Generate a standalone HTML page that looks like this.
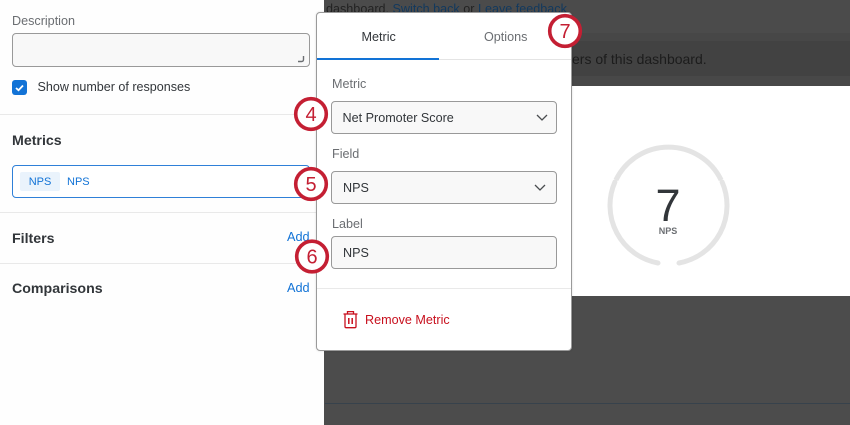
<!DOCTYPE html>
<html>
<head>
<meta charset="utf-8">
<style>
html,body{margin:0;padding:0;}
body{width:850px;height:425px;overflow:hidden;position:relative;background:#4c4c4c;font-family:"Liberation Sans",sans-serif;}
.a{position:absolute;white-space:nowrap;}
.box{position:absolute;box-sizing:border-box;border:1px solid #999;border-radius:4px;background:#f8f8f8;}
.lbl{color:#6b6e72;font-size:12.6px;line-height:16px;}
.h{color:#32363a;font-size:14.2px;font-weight:bold;line-height:18px;}
.val{color:#32363a;font-size:12.6px;line-height:16px;}
.blue{color:#1273d6;font-size:12.7px;line-height:16px;}
.sep{position:absolute;height:1px;background:#e9e9e9;}
</style>
</head>
<body>
<!-- dark background -->
<div class="a" style="left:325px;top:0;width:525px;height:33px;background:#4b4b4b;"></div>
<div class="a" style="left:325px;top:33px;width:525px;height:8px;background:#474747;"></div>
<div class="a" style="left:325px;top:41px;width:525px;height:35px;background:#424242;"></div>
<div class="a" style="left:325px;top:76px;width:525px;height:10px;background:#484848;"></div>
<div class="a" style="left:326px;top:0px;font-size:12.6px;line-height:18px;color:#222;">dashboard. <span style="color:#12395e;">Switch back</span> or <span style="color:#12395e;">Leave feedback</span></div>
<div class="a" style="left:572px;top:50px;font-size:14px;line-height:18px;color:#1c1c1c;">ers of this dashboard.</div>
<!-- white card -->
<div class="a" style="left:325px;top:86px;width:525px;height:210px;background:#fff;"></div>
<div class="a" style="left:325px;top:403px;width:525px;height:1px;background:#37424c;"></div>
<!-- gauge -->
<svg class="a" style="left:600px;top:137px;" width="137" height="137" viewBox="0 0 137 137">
  <g fill="none" stroke="#e4e4e4" stroke-width="5">
    <path d="M15.9 43A58.5 58.5 0 0 1 121.1 43"/>
    <path d="M122.1 45A58.5 58.5 0 0 1 79 126" stroke-linecap="round"/>
    <path d="M14.9 45A58.5 58.5 0 0 0 58 126" stroke-linecap="round"/>
  </g>
</svg>
<div class="a" style="left:648px;top:179px;width:40px;text-align:center;font-size:45px;line-height:54px;color:#32363a;">7</div>
<div class="a" style="left:648px;top:226px;width:40px;text-align:center;font-size:9px;line-height:11px;font-weight:bold;color:#6b6e72;">NPS</div>

<!-- left panel -->
<div class="a" style="left:0;top:0;width:324px;height:425px;background:#fefefe;"></div>
<div class="a lbl" style="left:12px;top:13px;">Description</div>
<div class="box" style="left:12px;top:33px;width:298px;height:34px;"></div>
<svg class="a" style="left:296px;top:54px;" width="10" height="10"><path d="M7.5 2V5.5Q7.5 7.5 5.5 7.5H2" fill="none" stroke="#6b6e72" stroke-width="1.4"/></svg>
<div class="a" style="left:12px;top:80px;width:15px;height:15px;border-radius:3px;background:#1273d6;"></div>
<svg class="a" style="left:12px;top:80px;" width="15" height="15"><path d="M4 8L6.5 10.2L11 5.5" fill="none" stroke="#fff" stroke-width="1.8"/></svg>
<div class="a" style="left:37.5px;top:79px;font-size:12.55px;line-height:16px;color:#32363a;">Show number of responses</div>
<div class="sep" style="left:0;top:114px;width:324px;"></div>
<div class="a h" style="left:12px;top:132px;">Metrics</div>
<div class="a" style="left:12px;top:165px;width:298px;height:33px;box-sizing:border-box;border:1px solid #2f80d8;border-radius:4px;background:#fff;"></div>
<div class="a" style="left:20px;top:172px;width:40px;height:19px;background:#eaf3fc;border-radius:2px;"></div>
<div class="a blue" style="left:20px;top:174px;width:40px;text-align:center;font-size:11px;">NPS</div>
<div class="a blue" style="left:67px;top:174px;font-size:11px;">NPS</div>
<div class="sep" style="left:0;top:212px;width:324px;"></div>
<div class="a h" style="left:12px;top:230px;">Filters</div>
<div class="a blue" style="left:287px;top:229px;">Add</div>
<div class="sep" style="left:0;top:263px;width:324px;"></div>
<div class="a h" style="left:12px;top:280px;">Comparisons</div>
<div class="a blue" style="left:287px;top:280px;">Add</div>

<!-- popover -->
<div class="a" style="left:316px;top:12px;width:256px;height:339px;box-sizing:border-box;background:#fff;border:1px solid #9a9a9a;border-radius:4px;box-shadow:0 0 2px rgba(0,0,0,.15);"></div>
<div class="a" style="left:317px;top:59px;width:254px;height:1px;background:#e4e4e4;"></div>
<div class="a" style="left:317px;top:58px;width:122px;height:2px;background:#1273d6;"></div>
<div class="a" style="left:361.5px;top:29px;font-size:12.6px;line-height:16px;color:#32363a;">Metric</div>
<div class="a" style="left:484px;top:29px;font-size:12.6px;line-height:16px;color:#6b6e72;">Options</div>

<div class="a lbl" style="left:332px;top:76px;">Metric</div>
<div class="box" style="left:331px;top:101px;width:226px;height:33px;"></div>
<div class="a val" style="left:342.5px;top:110px;">Net Promoter Score</div>
<svg class="a" style="left:535px;top:113px;" width="14" height="9"><path d="M2 2L7 7L12 2" fill="none" stroke="#4a4d50" stroke-width="1.3"/></svg>

<div class="a lbl" style="left:332px;top:146px;">Field</div>
<div class="box" style="left:331px;top:171px;width:226px;height:33px;"></div>
<div class="a val" style="left:343px;top:180px;">NPS</div>
<svg class="a" style="left:533px;top:183px;" width="14" height="9"><path d="M2 2L7 7L12 2" fill="none" stroke="#4a4d50" stroke-width="1.3"/></svg>

<div class="a lbl" style="left:332px;top:216px;">Label</div>
<div class="box" style="left:331px;top:236px;width:226px;height:33px;"></div>
<div class="a val" style="left:343px;top:245px;">NPS</div>

<div class="a" style="left:317px;top:288px;width:254px;height:1px;background:#e9e9e9;"></div>
<svg class="a" style="left:342px;top:310px;" width="17" height="19" viewBox="0 0 17 19">
  <g fill="none" stroke="#c8101e" stroke-width="1.3">
    <path d="M1.5 4H15.5"/>
    <path d="M5.5 4V1.6H11.5V4"/>
    <path d="M3 4V16.5Q3 17.7 4.2 17.7H12.8Q14 17.7 14 16.5V4"/>
    <path d="M6.8 8V14M10.2 8V14" stroke-width="1.5"/>
  </g>
</svg>
<div class="a" style="left:365px;top:312px;font-size:12.6px;line-height:16px;color:#c8101e;">Remove Metric</div>

<!-- callouts -->
<svg class="a" style="left:0;top:0;" width="850" height="425">
  <g fill="#fff" stroke="#c41f33" stroke-width="3.6">
    <circle cx="311" cy="114" r="15.3"/>
    <circle cx="311" cy="184" r="15.3"/>
    <circle cx="312" cy="256.5" r="15.3"/>
    <circle cx="565" cy="31" r="15.3"/>
  </g>
  <g fill="#c41f33" font-family="Liberation Sans, sans-serif" font-size="20" text-anchor="middle">
    <text x="311" y="121">4</text>
    <text x="311" y="191">5</text>
    <text x="312" y="263.5">6</text>
    <text x="565" y="38">7</text>
  </g>
</svg>
</body>
</html>
